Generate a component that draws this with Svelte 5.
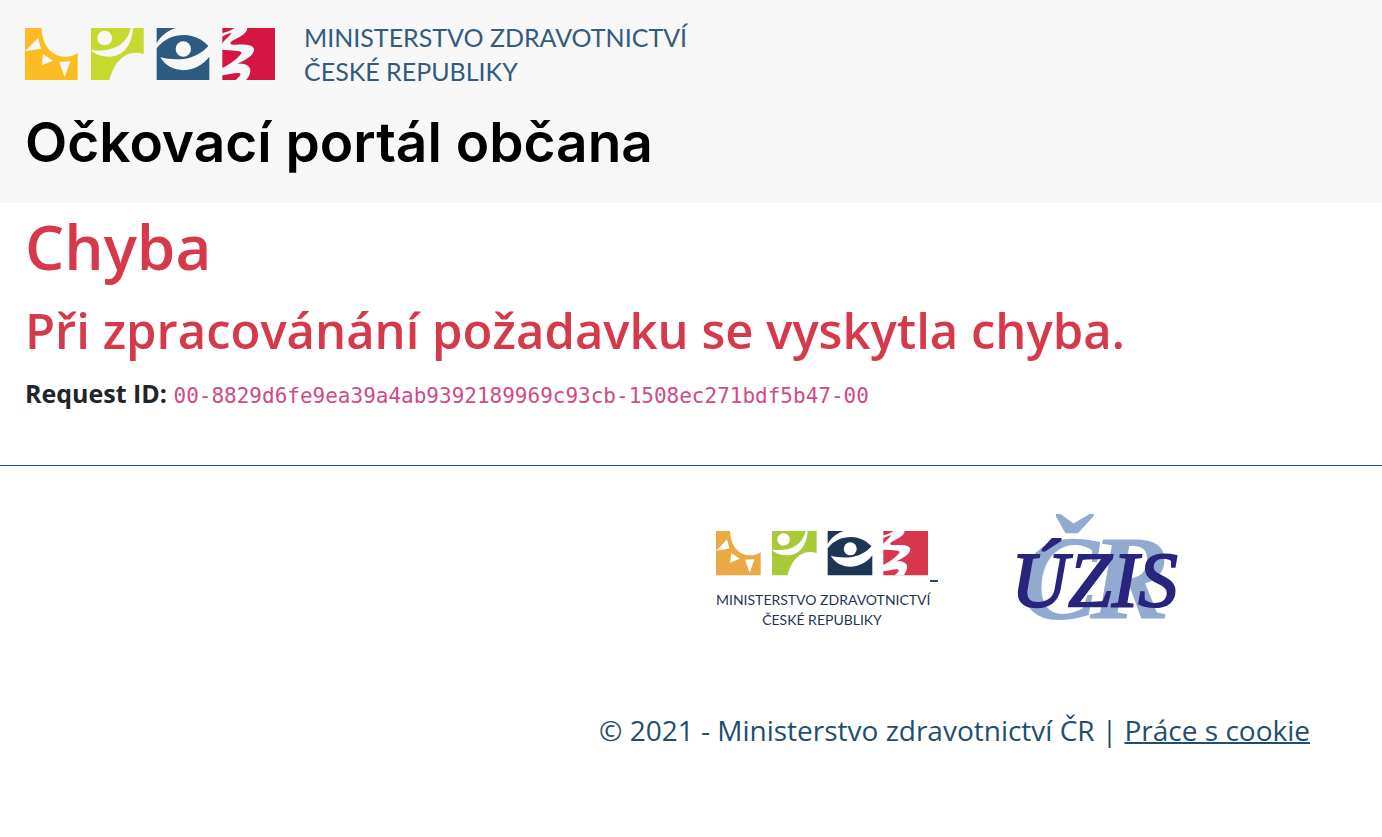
<script>
  const requestId = '00-8829d6fe9ea39a4ab9392189969c93cb-1508ec271bdf5b47-00';
</script>

{#snippet tiles()}
  <svg class="tiles" viewBox="30 38 750 158" aria-hidden="true">
    <!-- sun -->
    <path class="sun" d="M30 38H80C80 88 110 124 148 124C165 124 180 120 188 112V195H30Z" />
    <path class="cut" d="M69 68L30 108L78 100ZM84 116L114 136L80 150ZM133 140L166 138L149 186Z" />
    <!-- figure -->
    <path class="figure" d="M228 38H386V116C330 98 295 145 283 195H228Z" />
    <circle class="cut" cx="269" cy="68" r="22" />
    <path class="cut" d="M228 104C290 112 336 90 347 38H354C352 75 335 122 285 124C260 124 240 118 228 104Z" />
    <!-- eye -->
    <path class="eye" d="M425 38H482C458 46 436 62 425 84Z" />
    <path class="eye" d="M425 99C445 72 475 59 508 59C538 60 564 73 580 92C563 111 540 125 512 130C482 134 456 131 436 126C468 180 545 175 583 124V195H425Z" />
    <circle class="cut" cx="505" cy="101" r="23" />
    <!-- ribbon -->
    <path class="ribbon" d="M622 38H780V195H622Z" />
    <path
      class="cut"
      d="M658 38H697C697 55 672 66 652 76C642 84 644 88 664 88C702 86 720 92 717 106C712 126 682 136 668 146C692 143 708 153 706 168C704 182 698 190 692 195H662C670 187 682 177 674 174C660 171 640 180 621 180V158C648 146 676 122 680 112C676 105 650 106 621 104V86C626 76 640 66 650 54C644 52 632 58 621 64V54C634 50 648 46 658 38Z"
    />
  </svg>
{/snippet}

<header class="header">
  <a class="brand" href="/">
    {@render tiles()}
    <span class="brand-name">MINISTERSTVO ZDRAVOTNICTVÍ<br />ČESKÉ REPUBLIKY</span>
  </a>
  <p class="portal">Očkovací portál občana</p>
</header>

<main class="main">
  <h1>Chyba</h1>
  <h2>Při zpracovánání požadavku se vyskytla chyba.</h2>
  <p class="request"><strong>Request ID:</strong> <code>{requestId}</code></p>
</main>

<footer class="footer">
  <div class="logos">
    <a class="ministry" href="/">
      <span class="ministry-mark">
        {@render tiles()}
        <span class="dash"></span>
      </span>
      <span class="ministry-name">MINISTERSTVO ZDRAVOTNICTVÍ<br />ČESKÉ REPUBLIKY</span>
    </a>
    <a class="uzis" href="/">
      <svg viewBox="0 0 164 108" role="img" aria-label="ÚZIS ČR">
        <text class="cr" y="105"><tspan x="5">Č</tspan><tspan x="76">R</tspan></text>
        <text class="uz" x="-3" y="92">ÚZIS</text>
      </svg>
    </a>
  </div>
  <p class="copyright">© 2021 - Ministerstvo zdravotnictví ČR | <a href="/">Práce s cookie</a></p>
</footer>

<style>
  :global(body) {
    margin: 0;
    background: #fff;
    color: #212529;
    font-family: "Segoe UI", "Open Sans", sans-serif;
  }

  .header {
    --cut: #f7f7f7;
    --sun: #fdbb24;
    --figure: #c6d92d;
    --eye: #2f5a80;
    --ribbon: #d51642;
    padding: 20px 25px 29px;
    background: #f7f7f7;
  }

  .brand {
    display: flex;
    align-items: center;
    gap: 29px;
    color: #335b80;
    text-decoration: none;
  }

  .tiles {
    display: block;
    flex-shrink: 0;
  }

  .brand .tiles {
    width: 250px;
  }

  .brand-name {
    font: 25px/34px Lato, sans-serif;
  }

  .portal {
    margin: 22px 0 0;
    color: #000;
    font: 600 55px/64px Inter, sans-serif;
  }

  /* Logo colours come from the section the logo stands in */
  .sun {
    fill: var(--sun);
  }

  .figure {
    fill: var(--figure);
  }

  .eye {
    fill: var(--eye);
  }

  .ribbon {
    fill: var(--ribbon);
  }

  .cut {
    fill: var(--cut);
  }

  .main {
    padding: 7px 25px 54px;
  }

  h1,
  h2 {
    margin: 0;
    color: #d63a4a;
    font-weight: 600;
  }

  h1 {
    font-size: 62px;
    line-height: 72px;
  }

  h2 {
    margin-top: 16px;
    font-size: 49px;
    line-height: 64px;
  }

  .request {
    margin: 13px 0 0;
    font-size: 25px;
    line-height: 36px;
  }

  code {
    color: #d04a8a;
    font: 21px "DejaVu Sans Mono", monospace;
  }

  .footer {
    --cut: #fff;
    --sun: #eaa943;
    --figure: #a9ca38;
    --eye: #1e3653;
    --ribbon: #d8364f;
    border-top: 1px solid #1f4e79;
  }

  .logos {
    display: flex;
    justify-content: flex-end;
    gap: 76px;
    padding: 48px 204px 0 0;
  }

  .ministry {
    display: flex;
    flex-direction: column;
    gap: 8px;
    padding-top: 17px;
    color: #1e3653;
    text-decoration: none;
  }

  .ministry-mark {
    display: flex;
    align-items: flex-end;
    gap: 2px;
  }

  .ministry .tiles {
    width: 212px;
    margin-bottom: 6px;
  }

  .dash {
    width: 8px;
    height: 2px;
    background: #1f4e6e;
  }

  .ministry-name {
    width: 212px;
    font: 14px/20px Lato, sans-serif;
    text-align: center;
    white-space: nowrap;
  }

  .uzis svg {
    display: block;
    width: 164px;
    overflow: visible;
  }

  .cr {
    fill: #92aad0;
    font: italic bold 120px "Liberation Serif", serif;
  }

  .uz {
    fill: #29247d;
    stroke: #29247d;
    stroke-width: 2px;
    font: italic 79px "Liberation Serif", serif;
  }

  .copyright {
    margin: 80px 72px 64px;
    color: #1f4e6e;
    font-size: 28px;
    line-height: 40px;
    text-align: right;
  }

  .copyright a {
    color: inherit;
    text-decoration-thickness: 2px;
  }
</style>
